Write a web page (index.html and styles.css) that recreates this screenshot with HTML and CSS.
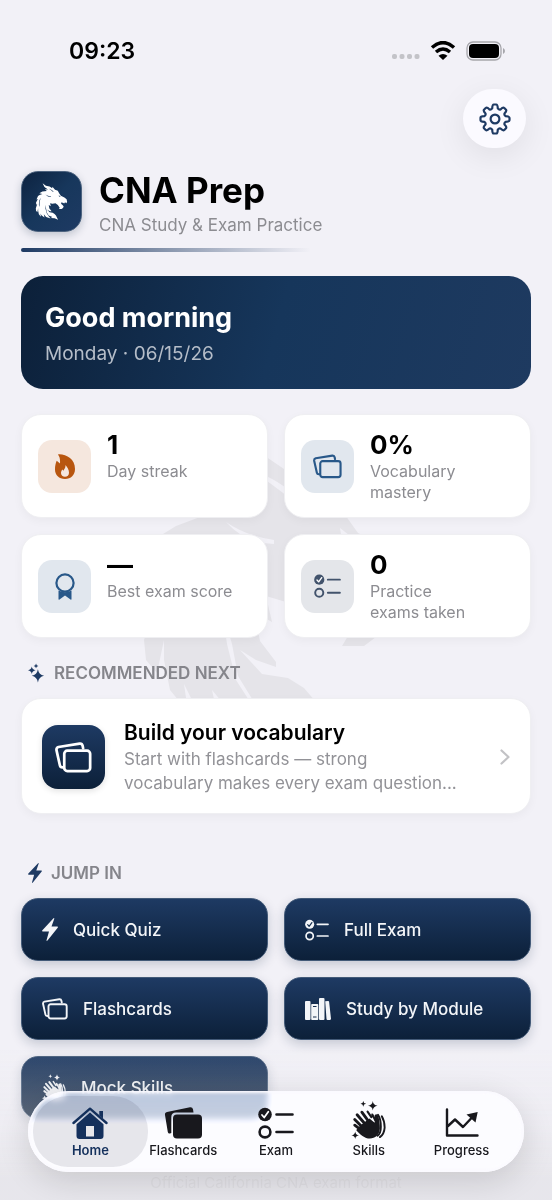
FILE: index.html
```html
<!DOCTYPE html>
<html lang="en">
<head>
    <meta charset="UTF-8">
    <meta name="viewport" content="width=device-width, initial-scale=1.0">
    <title>CNA Prep</title>
    <link rel="stylesheet" href="styles.css">
</head>
<body>
    <!-- Icons -->
    <svg class="sprite" aria-hidden="true">
        <symbol id="dragon" viewBox="140 424 276 316">
            <path d="M202 426 L230 447 L262 454 L284 469 L286 456 L308 482 L332 491 L343 512 L358 533 L388 547 L407 562 L412 586 L404 597 L394 589 L386 600 L376 592 L358 590 L362 604 L374 614 L382 624 L376 637 L364 646 L342 646 L348 636 L332 612 L312 598 L286 602 L266 596 L272 622 L254 612 L260 641 L276 662 L276 667 L256 660 L240 650 L262 674 L288 678 L304 688 L316 702 L334 738 L304 726 L270 722 L286 714 L254 702 L238 676 L232 644 L222 610 L227 644 L236 680 L254 708 L270 728 L232 714 L212 690 L218 718 L192 700 L184 684 L188 712 L170 690 L164 660 L164 640 L157 673 L146 660 L144 640 L156 604 L148 610 L146 590 L162 560 L150 564 L163 534 L176 526 L200 517 L174 512 L200 496 L238 492 L222 478 L248 480 L218 458 Z"/>
            <path class="dragon-gap" d="M226 522 Q246 536 274 540 L274 544 Q246 544 226 522 Z M254 472 Q272 476 294 494 L292 500 Q272 484 254 472 Z M340 528 L358 542 L342 540 Z M186 550 Q170 590 176 630 Q160 590 186 550 Z"/>
        </symbol>
        <symbol id="gear" viewBox="-16 -16 32 32">
            <path fill="none" stroke="currentColor" stroke-width="2.200" stroke-linejoin="round" d="M-2.8-10.6Q-2.6-14.500 -1.2-14.500H1.2Q2.6-14.500 2.8-10.6Q4-9 5.5-9.5Q8-12 9.3-11L11-9.3Q12-8 9.5-5.5Q9-4 10.6-2.8Q14.500-2.6 14.500-1.2V1.2Q14.500 2.6 10.6 2.8Q9 4 9.5 5.5Q12 8 11 9.3L9.3 11Q8 12 5.5 9.5Q4 9 2.8 10.6Q2.6 14.500 1.2 14.500H-1.2Q-2.6 14.500 -2.8 10.6Q-4 9 -5.5 9.5Q-8 12 -9.3 11L-11 9.3Q-12 8 -9.5 5.5Q-9 4 -10.6 2.8Q-14.500 2.6 -14.500 1.2V-1.2Q-14.500-2.6 -10.6-2.8Q-9-4 -9.5-5.5Q-12-8 -11-9.3L-9.3-11Q-8-12 -5.5-9.5Q-4-9 -2.8-10.6Z"/>
            <circle r="4.400" fill="none" stroke="currentColor" stroke-width="2.200"/>
        </symbol>
        <symbol id="flame" viewBox="0 0 20 25">
            <path fill="currentColor" fill-rule="evenodd" d="M3 .4C11-.2 20 5 20 15c0 6-4 10-10 10S0 21 0 15.500c0-3.500.500-6 1.700-8.800L5 9.500C5.200 6 5 3 3 .4ZM10.500 11c.2 3.500-1.300 4-2 5.800L7.300 15.500C6.300 17 6 18 6 19c0 2.300 1.700 3.700 4 3.700s4-1.500 4-4c0-3.200-1.700-5.500-3.500-7.700Z"/>
        </symbol>
        <symbol id="cards" viewBox="0 0 30 25">
            <g fill="none" stroke="currentColor" stroke-width="2.200" stroke-linejoin="round" stroke-linecap="round">
                <rect x="7.500" y="7" width="21" height="16.500" rx="2.500"/>
                <path d="M6.500 20.500H6Q4.300 20.500 4 19L1.200 6.500Q1 4.500 2.800 4L20 1.200Q22 1 22.400 3L22.800 5"/>
            </g>
        </symbol>
        <symbol id="cards-fill" viewBox="0 0 38 32">
            <path fill="currentColor" d="M1 8Q.6 5.500 3 5L26 .3Q28.500 0 29 2.200L29.500 5.500H12Q7.300 5.500 7.300 10V26L6 26.500Q4.300 27 3.800 25Z"/>
            <rect x="9" y="7.500" width="29" height="24" rx="4" fill="currentColor"/>
        </symbol>
        <symbol id="ribbon" viewBox="0 0 20 27">
            <circle cx="10" cy="10" r="8.600" fill="none" stroke="currentColor" stroke-width="2.200"/>
            <path fill="currentColor" d="M3.500 17.500Q10 21 16.500 17.500V26Q16.500 27 15.500 26.400L10 22.500 4.500 26.400Q3.500 27 3.500 26Z"/>
        </symbol>
        <symbol id="checklist" viewBox="0 0 36 32">
            <circle cx="7" cy="7.500" r="6.800" fill="currentColor"/>
            <path class="tick" d="M4 8 6.200 10.500 10.300 4.800" fill="none" stroke-width="1.800" stroke-linecap="round" stroke-linejoin="round"/>
            <circle cx="7" cy="25" r="5.400" fill="none" stroke="currentColor" stroke-width="2.600"/>
            <path d="M18.500 7.500H34.500M18.500 25H34.500" stroke="currentColor" stroke-width="2.600" stroke-linecap="round"/>
        </symbol>
        <symbol id="sparkles" viewBox="0 0 18 20">
            <path fill="currentColor" d="M10.500 6Q11.500 12 17 13Q11.500 14 10.500 20Q9.500 14 4 13Q9.500 12 10.500 6ZM4 3Q4.600 6.400 8 7Q4.600 7.600 4 11Q3.400 7.600 0 7Q3.400 6.400 4 3ZM8.500 0Q8.800 2.200 11 2.500Q8.800 2.800 8.500 5Q8.200 2.800 6 2.500Q8.200 2.200 8.500 0Z"/>
        </symbol>
        <symbol id="bolt" viewBox="0 0 16 23">
            <path fill="currentColor" d="M11.500.3Q12.600-.3 12.200 1L9.500 8.500H15.300Q16.400 8.700 15.700 9.700L5.500 22.500Q4.300 23.500 4.600 22L7 13.500H.8Q-.4 13.200.4 12.200Z"/>
        </symbol>
        <symbol id="books" viewBox="0 0 26 22">
            <path fill="currentColor" fill-rule="evenodd" d="M1 3H4.500Q5.500 3 5.500 4V21Q5.500 22 4.500 22H1Q0 22 0 21V4Q0 3 1 3ZM7 6H12.500Q13.300 6 13.300 7V21Q13.300 22 12.500 22H7Q6.200 22 6.200 21V7Q6.200 6 7 6ZM8 8V9H11.500V8ZM8 18.500V19.500H11.500V18.500ZM15 0H18.500Q19.500 0 19.500 1V21Q19.500 22 18.500 22H15Q14 22 14 21V1Q14 0 15 0ZM20.200 3.200 23 2.900Q24 2.800 24.100 3.700L26 20.800Q26 21.800 25 21.900L22.500 22Q21.600 22 21.500 21Z"/>
        </symbol>
        <symbol id="hands" viewBox="0 0 36 40">
            <g fill="none" stroke="currentColor" stroke-linecap="round" stroke-linejoin="round">
                <path stroke-width="3" d="M3.500 19.500 13 29M3.500 25.500 12 32M6 14.500 16 26M11 11.800 20 24"/>
                <path stroke-width="2.200" d="M17 11.200 21 17M22 14.200 25 20"/>
                <path stroke-width="2" d="M28 14.500Q31 19 31 27Q31 34 27.500 36.500M32 16Q35 21 35 28Q34.500 35 30 38"/>
            </g>
            <path fill="currentColor" d="M9 26 19 18.500 24.500 23V15Q26.500 12.500 28.200 15.500C29.500 20 30 25 30 29C29.500 36 25 39.500 19.500 39.500C14 39.500 9 35.500 5 30.500Q8 28 9 26ZM12.500 0Q12.700 2.800 15.500 3Q12.700 3.200 12.500 6Q12.300 3.200 9.500 3Q12.300 2.800 12.500 0ZM22.500 0Q23 4.500 27.500 5Q23 5.500 22.500 10Q22 5.500 17.500 5Q22 4.500 22.500 0ZM4 32Q4.400 35.600 8 36Q4.400 36.400 4 40Q3.600 36.400 0 36Q3.600 35.600 4 32Z"/>
        </symbol>
        <symbol id="home" viewBox="0 0 36 32">
            <path fill="none" stroke="currentColor" stroke-width="2.400" stroke-linecap="round" stroke-linejoin="round" d="M1.500 16 18 1.700 34.500 16"/>
            <path fill="currentColor" fill-rule="evenodd" d="M27.300 4H31V11.500L27.300 8.300ZM18 5.500 31.500 17.200V29Q31.500 32 28.500 32H7.500Q4.500 32 4.500 29V17.200ZM14 19V29.500H22V19Z"/>
        </symbol>
        <symbol id="chart" viewBox="0 0 34 29">
            <path fill="none" stroke="currentColor" stroke-width="2.400" stroke-linecap="round" stroke-linejoin="round" d="M2 1.500V27.500H32.500M3 18 10 11.500 18 19 27 9.500"/>
            <path fill="currentColor" d="M32.700 4 30.500 14.500 21.500 6.500Z"/>
        </symbol>
    </svg>

    <!-- Status bar -->
    <div class="status-bar">
        <time>09:23</time>
        <div class="status-icons">
            <svg width="28" height="6" viewBox="0 0 28 6" fill="#c3c3c8"><rect width="5" height="5" rx="2"/><rect x="7.500" width="5" height="5" rx="2"/><rect x="15" width="5" height="5" rx="2"/><rect x="22.500" width="5" height="5" rx="2"/></svg>
            <svg width="26" height="20" viewBox="0 0 26 20"><path d="M2 6.500Q13-3.300 24 6.500M6 11Q13 5 20 11" fill="none" stroke="#000" stroke-width="3.500"/><path d="M13 19 8.500 14.700Q13 11.500 17.500 14.700Z"/></svg>
            <svg width="40" height="20" viewBox="0 0 40 20"><rect x="1" y="1" width="34" height="18" rx="6" fill="none" stroke="#a6a6ab" stroke-width="1.300"/><rect x="3" y="3" width="30" height="14" rx="4"/><path d="M37 7Q39 8 39 10Q39 12 37 13Z" fill="#a6a6ab"/></svg>
        </div>
    </div>

    <main class="page">
        <svg class="watermark" aria-hidden="true"><use href="#dragon"/></svg>

        <div class="toolbar">
            <button class="settings" type="button" aria-label="Settings"><svg width="32" height="32"><use href="#gear"/></svg></button>
        </div>

        <header class="brand">
            <div class="logo"><svg width="33" height="37"><use href="#dragon"/></svg></div>
            <div>
                <h1>CNA Prep</h1>
                <p>CNA Study &amp; Exam Practice</p>
            </div>
        </header>
        <div class="brand-line"></div>

        <section class="greeting">
            <h2>Good morning</h2>
            <p>Monday · 06/15/26</p>
        </section>

        <!-- Stats -->
        <section class="stats">
            <div class="card stat">
                <span class="stat-icon orange"><svg width="20" height="25"><use href="#flame"/></svg></span>
                <div><strong>1</strong><p>Day streak</p></div>
            </div>
            <div class="card stat">
                <span class="stat-icon blue"><svg width="29" height="25"><use href="#cards"/></svg></span>
                <div><strong>0%</strong><p>Vocabulary<br>mastery</p></div>
            </div>
            <div class="card stat">
                <span class="stat-icon blue"><svg width="20" height="27"><use href="#ribbon"/></svg></span>
                <div><strong>—</strong><p>Best exam score</p></div>
            </div>
            <div class="card stat">
                <span class="stat-icon slate"><svg width="27" height="24"><use href="#checklist"/></svg></span>
                <div><strong>0</strong><p>Practice<br>exams taken</p></div>
            </div>
        </section>

        <h3 class="section-title"><svg width="17" height="20"><use href="#sparkles"/></svg>RECOMMENDED NEXT</h3>
        <a class="card recommended" href="#flashcards">
            <span class="recommended-icon"><svg width="37" height="31"><use href="#cards"/></svg></span>
            <span class="recommended-text">
                <strong>Build your vocabulary</strong>
                <span>Start with flashcards — strong<br>vocabulary makes every exam question...</span>
            </span>
            <svg class="chevron" width="10" height="16" viewBox="0 0 10 16"><path d="M1.500 1.500 8.500 8 1.500 14.500" fill="none" stroke="#c2c2c5" stroke-width="2.200" stroke-linecap="round" stroke-linejoin="round"/></svg>
        </a>

        <h3 class="section-title jump-title"><svg width="14" height="20"><use href="#bolt"/></svg>JUMP IN</h3>
        <section class="actions">
            <button type="button"><svg width="16" height="23"><use href="#bolt"/></svg>Quick Quiz</button>
            <button type="button"><svg width="24" height="22"><use href="#checklist"/></svg>Full Exam</button>
            <button type="button"><svg width="26" height="22"><use href="#cards"/></svg>Flashcards</button>
            <button type="button"><svg width="26" height="22"><use href="#books"/></svg>Study by Module</button>
            <button type="button"><svg width="24" height="27"><use href="#hands"/></svg>Mock Skills</button>
        </section>
        <p class="footnote">Official California CNA exam format</p>
    </main>

    <div class="bottom-fade"></div>
    <nav class="tabs">
        <a class="active" href="#home"><svg width="36" height="32"><use href="#home"/></svg>Home</a>
        <a href="#flashcards"><svg width="38" height="32"><use href="#cards-fill"/></svg>Flashcards</a>
        <a href="#exam"><svg width="36" height="32"><use href="#checklist"/></svg>Exam</a>
        <a href="#skills"><svg width="35" height="38"><use href="#hands"/></svg>Skills</a>
        <a href="#progress"><svg class="chart-icon" width="34" height="29"><use href="#chart"/></svg>Progress</a>
    </nav>
</body>
</html>
```
FILE: styles.css
```css
* {
    box-sizing: border-box;
}

body {
    --tick: #fff;
    --dragon-gap: #f2f1f7;
    margin: 0;
    min-height: 100vh;
    background: #f2f1f7;
    color: #000;
    font-family: Inter, "Liberation Sans", sans-serif;
}

h1, h2, h3, p {
    margin: 0;
}

a {
    color: inherit;
    text-decoration: none;
}

button {
    border: 0;
    font-family: inherit;
    cursor: pointer;
}

svg {
    display: block;
    flex-shrink: 0;
}

.sprite {
    position: absolute;
    width: 0;
    height: 0;
}

.tick {
    stroke: var(--tick);
}

.dragon-gap {
    fill: var(--dragon-gap);
}

/* Status bar */
.status-bar {
    display: flex;
    justify-content: space-between;
    align-items: center;
    height: 89px;
    padding: 12px 46px 0 69px;
}

.status-bar time {
    font-size: 23px;
    font-weight: 600;
}

.status-icons {
    display: flex;
    align-items: center;
    gap: 10px;
}

.status-icons svg:first-child {
    margin-top: 12px;
}

.page {
    position: relative;
    padding: 0 21px;
}

.watermark {
    position: absolute;
    z-index: -1;
    top: 335px;
    left: 50%;
    width: 276px;
    height: 316px;
    margin-left: -136px;
    fill: #e5e4e9;
}

.toolbar {
    display: flex;
    justify-content: flex-end;
    padding-right: 5px;
}

.settings {
    display: flex;
    align-items: center;
    justify-content: center;
    width: 63px;
    height: 59px;
    padding: 0;
    border-radius: 30px;
    background: #fbfaff;
    color: #1e3a63;
    box-shadow: 0 8px 32px rgba(0, 0, 0, 0.08);
}

.brand {
    display: flex;
    gap: 17px;
    margin-top: 21px;
}

.logo {
    --dragon-gap: #17375c;
    display: flex;
    align-items: center;
    justify-content: center;
    width: 61px;
    height: 61px;
    margin-top: 2px;
    border: 1px solid #4d637f;
    border-radius: 17px;
    background: linear-gradient(135deg, #0d2340, #17375c 50%, #1e3a63);
    fill: #fff;
    box-shadow: 0 3px 8px rgba(13, 35, 64, 0.22);
}

.brand h1 {
    font-size: 35px;
    font-weight: 700;
    line-height: 42px;
}

.brand p {
    color: #8c8c91;
    font-size: 17px;
    line-height: 28px;
}

.brand-line {
    width: 290px;
    height: 4px;
    margin-top: 9px;
    border-radius: 2px;
    background: linear-gradient(to right, #1e3a63, rgba(30, 58, 99, 0));
}

.greeting {
    margin-top: 24px;
    padding: 22px 24px 19px;
    border-radius: 22px;
    background: linear-gradient(105deg, #0c2039, #16365b 50%, #1e3a60);
    color: #fff;
}

.greeting h2 {
    font-size: 27px;
    font-weight: 700;
    line-height: 40px;
}

.greeting p {
    color: #b5bdc8;
    font-size: 19px;
    line-height: 32px;
}

/* Cards */
.card {
    border: 1px solid #efeff2;
    border-radius: 20px;
    background: #fff;
    box-shadow: 0 3px 10px rgba(0, 0, 0, 0.04);
}

.stats {
    display: grid;
    grid-template-columns: 1fr 1fr;
    gap: 16px;
    margin-top: 25px;
}

.stat {
    display: flex;
    align-items: center;
    gap: 16px;
    min-height: 104px;
    padding: 14px 16px;
}

.stat > div {
    align-self: flex-start;
}

.stat-icon {
    display: flex;
    align-items: center;
    justify-content: center;
    width: 53px;
    height: 53px;
    border-radius: 14px;
}

.orange {
    background: #f5e7de;
    color: #b8560f;
}

.blue {
    background: #e1e7ee;
    color: #285889;
}

.slate {
    background: #e4e6ea;
    color: #42536c;
}

.stat strong {
    display: block;
    font-size: 26px;
    font-weight: 700;
    line-height: 32px;
}

.stat p {
    color: #8c8c91;
    font-size: 16px;
    line-height: 21px;
}

.section-title {
    display: flex;
    align-items: center;
    gap: 9px;
    margin: 24px 7px 14px;
    color: #85858b;
    font-size: 17px;
    font-weight: 600;
    line-height: 22px;
}

.section-title svg {
    color: #1e3a63;
}

.recommended {
    display: flex;
    align-items: center;
    gap: 19px;
    padding: 20px 20px 18px;
}

.recommended-icon {
    display: flex;
    align-items: center;
    justify-content: center;
    width: 63px;
    height: 64px;
    border-radius: 16px;
    background: linear-gradient(#1e3a63, #0c2039);
    color: #fff;
    box-shadow: 0 2px 6px rgba(0, 0, 0, 0.12);
}

.recommended-text {
    flex: 1;
    color: #929297;
    font-size: 17px;
    line-height: 24px;
}

.recommended-text strong {
    display: block;
    color: #000;
    font-size: 21px;
    font-weight: 600;
    line-height: 28px;
}

/* Quick actions */
.jump-title {
    margin-top: 48px;
}

.actions {
    --tick: #17304f;
    display: grid;
    grid-template-columns: 1fr 1fr;
    gap: 16px;
}

.actions button {
    display: flex;
    align-items: center;
    gap: 15px;
    height: 63px;
    padding: 0 20px;
    border: 1px solid #435a78;
    border-radius: 17px;
    background: linear-gradient(#1e3a63, #0c2039);
    color: #f3f5f8;
    font-size: 17px;
    font-weight: 500;
    box-shadow: 0 4px 12px rgba(13, 35, 64, 0.2);
}

.footnote {
    margin-top: 53px;
    color: #8c8c91;
    font-size: 15px;
    line-height: 22px;
    text-align: center;
}

/* Tab bar */
.bottom-fade {
    position: fixed;
    right: 0;
    bottom: 0;
    left: 0;
    height: 150px;
    background: linear-gradient(rgba(236, 236, 240, 0.05), rgba(232, 231, 236, 0.4) 50%, rgba(230, 229, 234, 0.92) 85%);
    pointer-events: none;
}

.tabs {
    position: fixed;
    right: 28px;
    bottom: 28px;
    left: 28px;
    display: flex;
    height: 81px;
    padding: 0 16px;
    border-radius: 41px;
    background: rgba(251, 250, 255, 0.66);
    box-shadow: 0 8px 32px rgba(0, 0, 0, 0.14), inset 0 0 3px 2px #fbfaff;
    backdrop-filter: blur(3px) brightness(1.15) saturate(2);
}

.tabs a {
    position: relative;
    display: flex;
    flex: 1;
    flex-direction: column;
    align-items: center;
    justify-content: flex-end;
    gap: 3px;
    padding-bottom: 14px;
    color: #18181d;
    font-size: 13px;
    font-weight: 500;
    line-height: 16px;
}

.tabs .chart-icon {
    margin-bottom: 2px;
}

.tabs .active {
    color: #14305c;
    font-weight: 600;
}

.tabs .active::before {
    content: "";
    position: absolute;
    z-index: -1;
    inset: 5px -11px;
    border-radius: 35px;
    background: rgba(30, 30, 60, 0.1);
}
```
